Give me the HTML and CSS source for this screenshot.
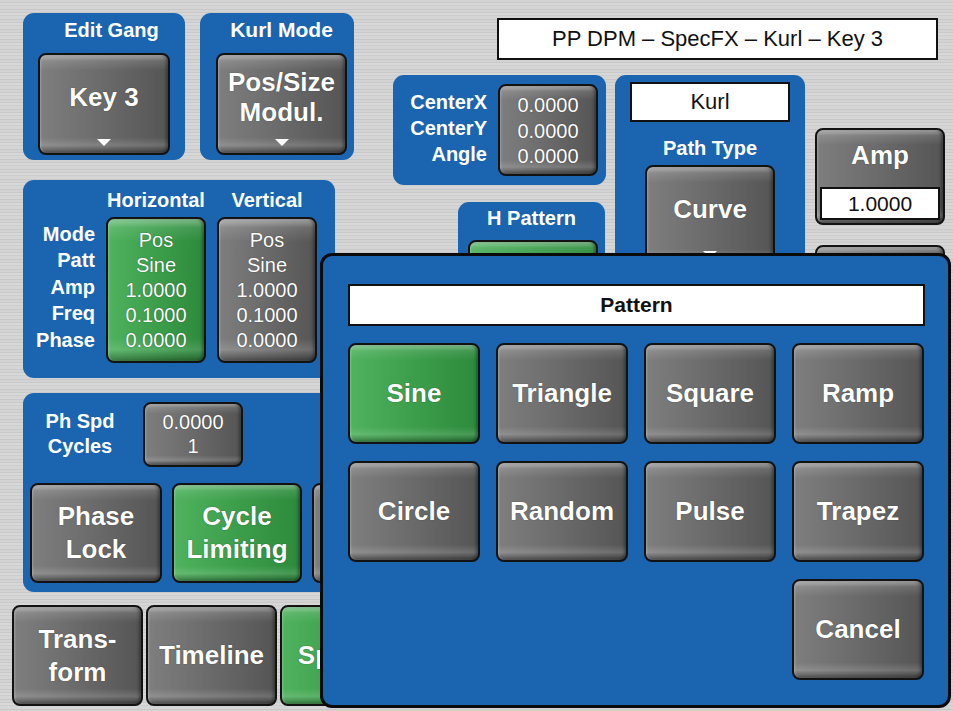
FILE: index.html
```html
<!DOCTYPE html>
<html lang="en">
<head>
  <meta charset="UTF-8">
  <meta name="viewport" content="width=device-width, initial-scale=1.0">
  <title>PP DPM - SpecFX - Kurl</title>
  <link rel="stylesheet" href="styles.css">
</head>
<body>
  <div class="screen">

    <div class="col-left">
      <div class="row-top">
        <section class="panel panel-gang">
          <div class="panel-title">Edit Gang</div>
          <div class="btn btn-menu btn-gang">
            <span>Key 3</span>
            <i class="arrow"></i>
          </div>
        </section>
        <section class="panel panel-mode">
          <div class="panel-title mode-title">Kurl Mode</div>
          <div class="btn btn-menu btn-mode">
            <span>Pos/Size</span>
            <span>Modul.</span>
            <i class="arrow"></i>
          </div>
        </section>
      </div>

      <section class="panel panel-hv">
        <div></div>
        <div class="hv-head">Horizontal</div>
        <div class="hv-head">Vertical</div>
        <div class="labels hv-labels">Mode<br>Patt<br>Amp<br>Freq<br>Phase</div>
        <div class="btn btn-green btn-values">
          <span>Pos</span><span>Sine</span><span>1.0000</span><span>0.1000</span><span>0.0000</span>
        </div>
        <div class="btn btn-values">
          <span>Pos</span><span>Sine</span><span>1.0000</span><span>0.1000</span><span>0.0000</span>
        </div>
      </section>

      <section class="panel panel-phase">
        <div class="phase-top">
          <div class="labels phase-labels">Ph Spd<br>Cycles</div>
          <div class="btn btn-small">
            <span>0.0000</span><span>1</span>
          </div>
        </div>
        <div class="phase-buttons">
          <div class="btn btn-big">Phase<br>Lock</div>
          <div class="btn btn-big btn-green btn-cycle">Cycle<br>Limiting</div>
          <div class="btn btn-big"></div>
        </div>
      </section>

      <nav class="tabs">
        <div class="btn btn-tab">Trans-<br>form</div>
        <div class="btn btn-tab">Timeline</div>
        <div class="btn btn-tab btn-green">SpecFX</div>
      </nav>
    </div>

    <div class="col-right">
      <div class="white-box title-box">PP DPM &ndash; SpecFX &ndash; Kurl &ndash; Key 3</div>

      <div class="row-mid">
        <div class="col-a">
          <section class="panel panel-center">
            <div class="labels center-labels">CenterX<br>CenterY<br>Angle</div>
            <div class="btn btn-center">
              <span>0.0000</span><span>0.0000</span><span>0.0000</span>
            </div>
          </section>
          <section class="panel panel-hpat">
            <div class="panel-title hpat-title">H Pattern</div>
            <div class="btn btn-green btn-hpat"></div>
          </section>
        </div>

        <section class="panel panel-kurl">
          <div class="white-box kurl-box">Kurl</div>
          <div class="path-label">Path Type</div>
          <div class="btn btn-menu btn-curve">
            <span>Curve</span>
            <i class="arrow"></i>
          </div>
        </section>

        <div class="col-c">
          <div class="btn btn-amp">
            <span class="amp-label">Amp</span>
            <div class="white-box amp-box">1.0000</div>
          </div>
          <div class="btn btn-amp2"></div>
        </div>
      </div>
    </div>

    <div class="popup">
      <div class="white-box popup-title">Pattern</div>
      <div class="popup-grid">
        <div class="btn btn-green btn-choice">Sine</div>
        <div class="btn btn-choice">Triangle</div>
        <div class="btn btn-choice">Square</div>
        <div class="btn btn-choice">Ramp</div>
        <div class="btn btn-choice">Circle</div>
        <div class="btn btn-choice">Random</div>
        <div class="btn btn-choice">Pulse</div>
        <div class="btn btn-choice">Trapez</div>
        <div class="btn btn-choice btn-cancel">Cancel</div>
      </div>
    </div>

  </div>
</body>
</html>
```
FILE: styles.css
```css
body {
  margin: 0;
  font-family: "Liberation Sans", Arial, sans-serif;
}

.screen {
  position: relative;
  width: 953px;
  height: 711px;
  box-sizing: border-box;
  padding: 13px 0 0 23px;
  display: flex;
  overflow: hidden;
  background-color: #d0d0d0;
  background-image: repeating-linear-gradient(180deg,
    #d3d3d3 0px, #d3d3d3 2px,
    #c9c9c9 2px, #c9c9c9 3px,
    #d8d8d8 3px, #d8d8d8 5px,
    #cdcdcd 5px, #cdcdcd 6px,
    #d5d5d5 6px, #d5d5d5 9px,
    #c8c8c8 9px, #c8c8c8 10px);
}

/* blue group panels */
.panel {
  background: #1a64b0;
  border-radius: 11px;
  color: #fff;
  box-sizing: border-box;
}
.panel-title {
  height: 40px;
  line-height: 34px;
  text-align: center;
  font-size: 20px;
  font-weight: bold;
}
.mode-title {
  font-size: 21px;
  margin-right: 7px;
}
.labels {
  font-size: 20px;
  font-weight: bold;
  color: #fff;
}

/* glossy buttons */
.btn {
  position: relative;
  flex: none;
  box-sizing: border-box;
  display: flex;
  flex-direction: column;
  align-items: center;
  justify-content: center;
  text-align: center;
  color: #fff;
  font-weight: bold;
  font-size: 26px;
  line-height: 33px;
  border: 2px solid #121212;
  border-radius: 8px;
  text-shadow: 0 0 1px rgba(0, 0, 0, .6);
  background:
    linear-gradient(180deg, rgba(255,255,255,.45) 0, rgba(255,255,255,.12) 6%, rgba(255,255,255,0) 16%, rgba(0,0,0,0) 84%, rgba(255,255,255,.14) 92%, rgba(0,0,0,.35) 100%),
    linear-gradient(90deg, #7e7e7e 0%, #6c6c6c 45%, #555 100%);
  box-shadow: inset 1px 0 2px rgba(255,255,255,.25), inset -2px 0 3px rgba(0,0,0,.35);
}
.btn-green {
  background:
    linear-gradient(180deg, rgba(255,255,255,.4) 0, rgba(255,255,255,.1) 6%, rgba(255,255,255,0) 16%, rgba(0,0,0,0) 84%, rgba(255,255,255,.12) 92%, rgba(0,0,0,.3) 100%),
    linear-gradient(90deg, #4fb25e 0%, #3c9e4b 50%, #2d8a3c 100%);
}
.btn-menu {
  padding-bottom: 14px;
  line-height: 30px;
}
.arrow {
  position: absolute;
  left: 50%;
  bottom: 7px;
  margin-left: -7px;
  width: 0;
  height: 0;
  border-left: 7px solid transparent;
  border-right: 7px solid transparent;
  border-top: 7px solid #fff;
}

/* left column */
.col-left {
  width: 331px;
  flex: none;
  display: flex;
  flex-direction: column;
}
.row-top {
  display: flex;
  gap: 15px;
}
.panel-gang {
  width: 162px;
  height: 147px;
  padding-left: 15px;
}
.btn-gang {
  width: 132px;
  height: 102px;
}
.panel-mode {
  width: 154px;
  height: 147px;
  padding-left: 16px;
}
.btn-mode {
  width: 131px;
  height: 102px;
}

.panel-hv {
  margin-top: 20px;
  width: 312px;
  height: 198px;
  padding-left: 8px;
  display: grid;
  grid-template-columns: 64px 100px 100px;
  grid-template-rows: 37px 146px;
  column-gap: 11px;
}
.hv-head {
  padding-top: 8px;
  line-height: 24px;
  text-align: center;
  font-size: 20px;
  font-weight: bold;
  white-space: nowrap;
}
.hv-labels {
  align-self: center;
  margin-top: -6px;
  text-align: right;
  line-height: 26.5px;
}
.btn-values {
  font-size: 20px;
  font-weight: normal;
  line-height: 25px;
  padding-top: 1px;
}

.panel-phase {
  margin-top: 15px;
  width: 340px;
  height: 199px;
  padding: 9px 0 0 7px;
}
.phase-top {
  display: flex;
  align-items: center;
  gap: 13px;
}
.phase-labels {
  width: 100px;
  margin-top: -2px;
  text-align: center;
  line-height: 25px;
}
.btn-small {
  width: 100px;
  height: 65px;
  font-size: 20px;
  font-weight: normal;
  line-height: 24px;
  padding-bottom: 2px;
}
.phase-buttons {
  margin-top: 16px;
  display: flex;
  gap: 10px;
}
.btn-big {
  width: 132px;
  height: 100px;
}
.btn-cycle {
  width: 130px;
}

.tabs {
  margin: 13px 0 0 -11px;
  display: flex;
  gap: 3px;
}
.btn-tab {
  width: 131px;
  height: 101px;
}

/* right column */
.col-right {
  margin-left: 39px;
  width: 552px;
  flex: none;
  display: flex;
  flex-direction: column;
}
.white-box {
  box-sizing: border-box;
  background: #fff;
  border: 2px solid #111;
  color: #111;
  text-align: center;
}
.title-box {
  margin: 5px 0 0 104px;
  width: 441px;
  height: 42px;
  line-height: 38px;
  font-size: 22px;
}
.row-mid {
  margin-top: 15px;
  display: flex;
  align-items: flex-start;
}
.col-a {
  width: 213px;
  flex: none;
  display: flex;
  flex-direction: column;
}
.panel-center {
  height: 110px;
  padding: 9px 0 0 12px;
  display: flex;
  gap: 11px;
}
.center-labels {
  width: 82px;
  text-align: right;
  line-height: 26px;
  padding-top: 5px;
}
.btn-center {
  width: 100px;
  height: 92px;
  font-size: 20px;
  font-weight: normal;
  line-height: 25.5px;
  padding-top: 3px;
}
.panel-hpat {
  margin: 17px 0 0 65px;
  width: 147px;
  height: 120px;
  padding-left: 10px;
}
.hpat-title {
  height: 38px;
  line-height: 32px;
  margin-left: -10px;
}
.btn-hpat {
  width: 130px;
  height: 100px;
}

.panel-kurl {
  flex: none;
  margin-left: 9px;
  width: 190px;
  height: 230px;
  padding: 7px 0 0 15px;
}
.kurl-box {
  width: 160px;
  height: 40px;
  line-height: 36px;
  font-size: 22px;
}
.path-label {
  height: 43px;
  padding-top: 14px;
  box-sizing: border-box;
  line-height: 24px;
  text-align: center;
  width: 160px;
  font-size: 20px;
  font-weight: bold;
}
.btn-curve {
  margin-left: 15px;
  width: 130px;
  height: 102px;
}

.col-c {
  margin: 53px 0 0 10px;
  display: flex;
  flex-direction: column;
}
.btn-amp {
  width: 130px;
  height: 97px;
  justify-content: flex-start;
  padding-top: 4px;
}
.amp-label {
  line-height: 42px;
}
.amp-box {
  margin-top: 11px;
  width: 120px;
  height: 33px;
  line-height: 29px;
  font-size: 21px;
  font-weight: normal;
  text-shadow: none;
}
.btn-amp2 {
  margin-top: 20px;
  width: 130px;
  height: 100px;
}

/* pattern chooser overlay */
.popup {
  position: absolute;
  left: 320px;
  top: 253px;
  width: 631px;
  height: 455px;
  box-sizing: border-box;
  border: 3px solid #0a0a0a;
  border-radius: 12px;
  background: #1a64b0;
  padding: 28px 0 0 25px;
}
.popup-title {
  width: 577px;
  height: 42px;
  line-height: 38px;
  font-size: 21px;
  font-weight: bold;
}
.popup-grid {
  margin-top: 17px;
  display: grid;
  grid-template-columns: repeat(4, 132px);
  grid-auto-rows: 101px;
  column-gap: 16px;
  row-gap: 17px;
}
.btn-cancel {
  grid-column: 4;
}
```
